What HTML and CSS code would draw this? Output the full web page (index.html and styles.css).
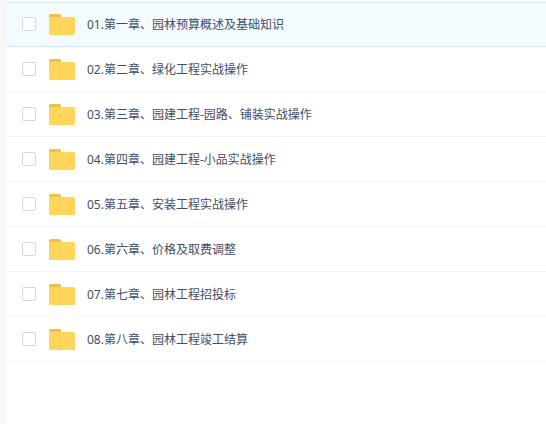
FILE: index.html
```
<!DOCTYPE html>
<html lang="zh-CN">
<head>
    <meta charset="UTF-8">
    <meta name="viewport" content="width=device-width, initial-scale=1.0">
    <title>文件列表</title>
    <link rel="stylesheet" href="styles.css">
</head>
<body>
    <!-- Folder icon, reused by every row -->
    <svg class="sprite" aria-hidden="true">
        <symbol id="folder" viewBox="0 0 26 21">
            <path fill="#edc04b" d="M0 1.5 Q0 0 1.5 0 H10.5 Q12 0 12 1.5 V6 H0 Z"/>
            <path fill="#ffd55a" d="M0 3 H24.5 Q26 3 26 4.5 V19.5 Q26 21 24.5 21 H1.5 Q0 21 0 19.5 Z"/>
        </symbol>
    </svg>

    <main class="panel">
        <ul class="file-list">
            <li class="file-row active">
                <input type="checkbox" class="check" id="file1">
                <svg class="folder"><use href="#folder"/></svg>
                <label class="name" for="file1">01.第一章、园林预算概述及基础知识</label>
            </li>
            <li class="file-row">
                <input type="checkbox" class="check" id="file2">
                <svg class="folder"><use href="#folder"/></svg>
                <label class="name" for="file2">02.第二章、绿化工程实战操作</label>
            </li>
            <li class="file-row">
                <input type="checkbox" class="check" id="file3">
                <svg class="folder"><use href="#folder"/></svg>
                <label class="name" for="file3">03.第三章、园建工程-园路、铺装实战操作</label>
            </li>
            <li class="file-row">
                <input type="checkbox" class="check" id="file4">
                <svg class="folder"><use href="#folder"/></svg>
                <label class="name" for="file4">04.第四章、园建工程-小品实战操作</label>
            </li>
            <li class="file-row">
                <input type="checkbox" class="check" id="file5">
                <svg class="folder"><use href="#folder"/></svg>
                <label class="name" for="file5">05.第五章、安装工程实战操作</label>
            </li>
            <li class="file-row">
                <input type="checkbox" class="check" id="file6">
                <svg class="folder"><use href="#folder"/></svg>
                <label class="name" for="file6">06.第六章、价格及取费调整</label>
            </li>
            <li class="file-row">
                <input type="checkbox" class="check" id="file7">
                <svg class="folder"><use href="#folder"/></svg>
                <label class="name" for="file7">07.第七章、园林工程招投标</label>
            </li>
            <li class="file-row">
                <input type="checkbox" class="check" id="file8">
                <svg class="folder"><use href="#folder"/></svg>
                <label class="name" for="file8">08.第八章、园林工程竣工结算</label>
            </li>
        </ul>
    </main>
</body>
</html>
```

FILE: styles.css
```
* {
    box-sizing: border-box;
}

body {
    margin: 0;
    padding-left: 6px;
    background: #f7f7f7;
    color: #424e67;
    font-family: "Noto Sans", "Noto Sans CJK SC", sans-serif;
    font-size: 12px;
    line-height: 18px;
}

.sprite {
    display: none;
}

.panel {
    min-height: 100vh;
    padding-top: 2px;
    background: #fff;
}

.file-list {
    margin: 0;
    padding: 0;
    list-style: none;
}

.file-row {
    display: flex;
    align-items: center;
    padding: 11px 16px;
    border-top: 1px solid transparent;
    border-bottom: 1px solid #f2f6fd;
}

.file-row.active {
    background: #f4fbff;
    border-color: #d4ebfc;
}

.check {
    appearance: none;
    flex: none;
    width: 14px;
    height: 14px;
    margin: 0 13px 1px 0;
    border: 1px solid #d0d8e2;
    border-radius: 2px;
    background: #fff;
    cursor: pointer;
}

.check:checked {
    border-color: #3b8cff;
    background: #3b8cff;
}

.folder {
    flex: none;
    width: 26px;
    height: 21px;
    margin-right: 12px;
}

.name {
    padding-top: 1px;
    cursor: pointer;
}
```
